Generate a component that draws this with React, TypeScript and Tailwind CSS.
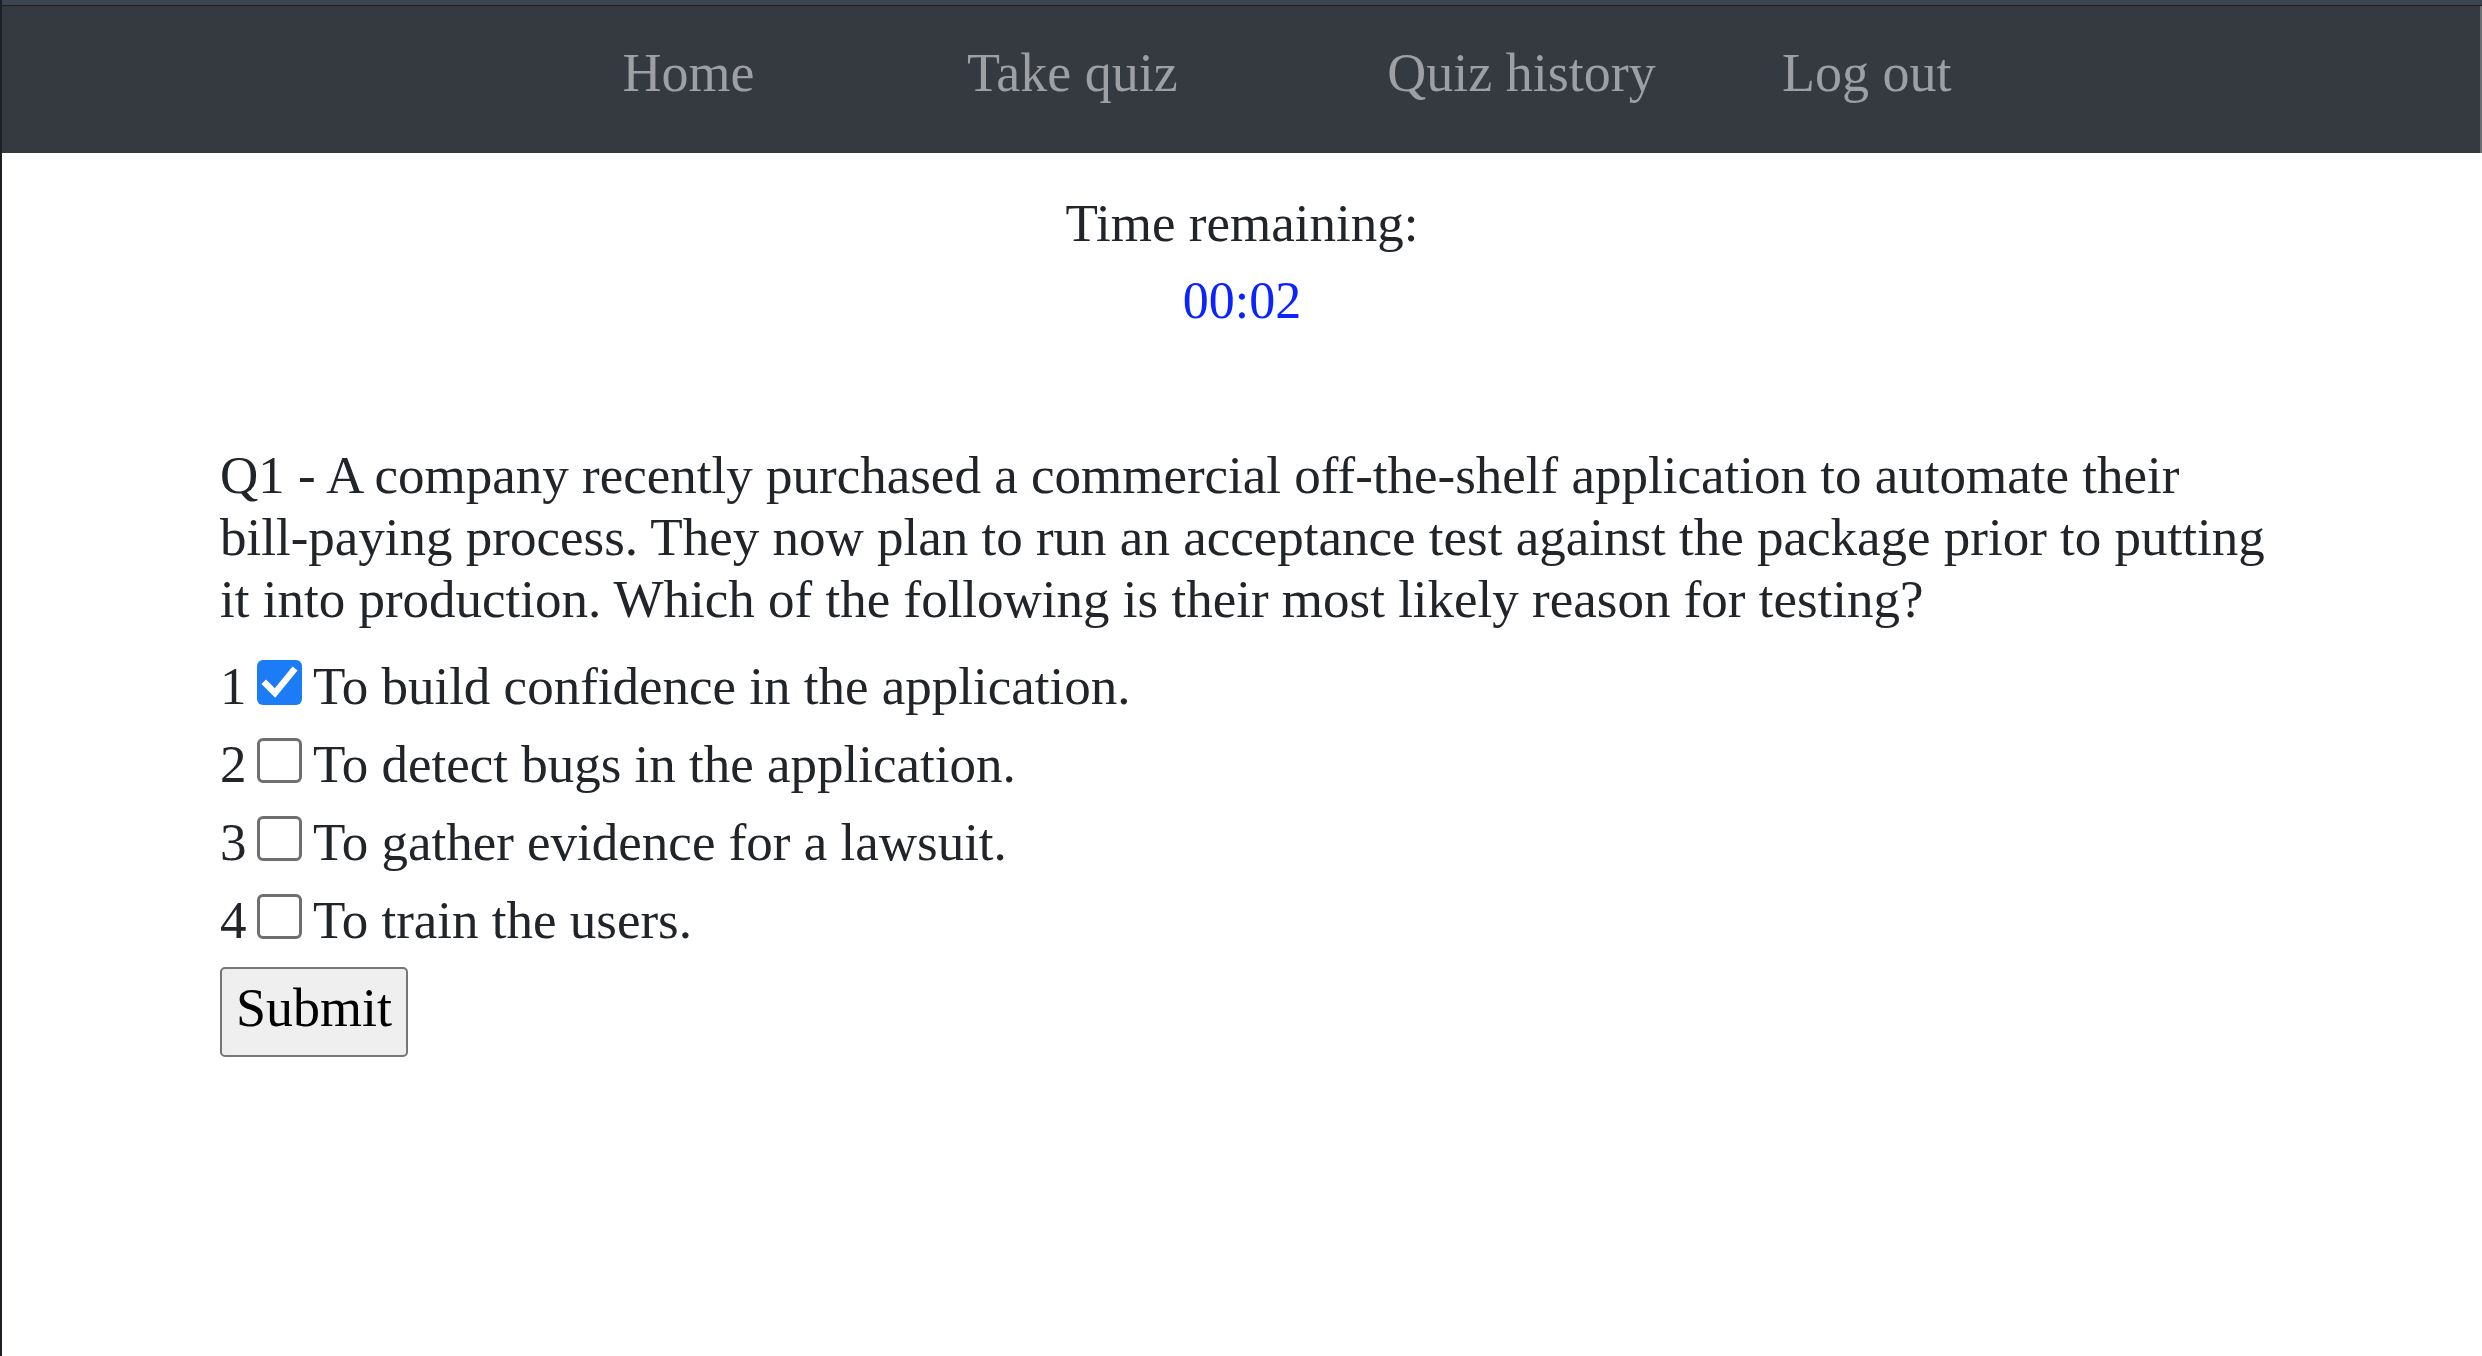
import { useState } from "react";

const navLinks = [
  { label: "Home", width: "w-[137px]", gap: "ml-0" },
  { label: "Take quiz", width: "w-[210px]", gap: "ml-[210px]" },
  { label: "Quiz history", width: "w-[269px]", gap: "ml-[210px]" },
  { label: "Log out", width: "w-[169px]", gap: "ml-[126px]" },
];

const answers = [
  "To build confidence in the application.",
  "To detect bugs in the application.",
  "To gather evidence for a lawsuit.",
  "To train the users.",
];

const CheckBox = ({ checked, onToggle }: { checked: boolean; onToggle: () => void }) => (
  <button
    type="button"
    onClick={onToggle}
    className={
      checked
        ? "mt-[13px] w-[45px] h-[45px] shrink-0 rounded-[6px] bg-[#1b7cf6] flex items-center justify-center"
        : "mt-[13px] w-[45px] h-[45px] shrink-0 rounded-[6px] border-[3px] border-[#6f6f6f] bg-white"
    }
  >
    {checked && (
      <svg width="45" height="45" viewBox="0 0 45 45">
        <polyline
          points="9,24 18,33 36,11"
          fill="none"
          stroke="white"
          strokeWidth="6.5"
          strokeLinecap="square"
        />
      </svg>
    )}
  </button>
);

const App = () => {
  const [selected, setSelected] = useState<number[]>([0]);

  const toggle = (i: number) => {
    setSelected((prev) => (prev.includes(i) ? prev.filter((x) => x !== i) : [...prev, i]));
  };

  return (
    <div className="min-h-[1356px] bg-white border-l-2 border-[#1c1f23] font-['Liberation_Serif',serif] text-[#212529]">
      {/* top bar */}
      <div className="h-[5px] bg-[#3b4552]" />
      <div className="h-px bg-[#1c1f23]" />
      <nav className="h-[147px] bg-[#343a40] border-r-2 border-[#6b6e72] flex items-start pt-[40px] pl-[618px]">
        {navLinks.map((link) => (
          <a
            key={link.label}
            href="#"
            className={`${link.width} ${link.gap} text-center text-[54px] leading-[54px] text-[#9d9fa2] whitespace-nowrap`}
          >
            {link.label}
          </a>
        ))}
      </nav>

      {/* timer */}
      <div className="mt-[40px] text-center">
        <div className="text-[53px] leading-[60px]">Time remaining:</div>
        <div className="mt-[18px] text-[52px] leading-[60px] text-[#0b24ff]">00:02</div>
      </div>

      {/* question */}
      <div className="mt-[113px] pl-[218px]">
        <p className="text-[53px] leading-[62px] whitespace-nowrap">
          Q1 - A company recently purchased a commercial off-the-shelf application to automate their
          <br />
          bill-paying process. They now plan to run an acceptance test against the package prior to putting
          <br />
          it into production. Which of the following is their most likely reason for testing?
        </p>

        <div className="mt-[17px] flex flex-col">
          {answers.map((answer, i) => (
            <div key={answer} className="flex items-start h-[78px] text-[53px] leading-[78px]">
              <span className="w-[37px]">{i + 1}</span>
              <CheckBox checked={selected.includes(i)} onToggle={() => toggle(i)} />
              <span className="ml-[11px] whitespace-nowrap">{answer}</span>
            </div>
          ))}
        </div>

        <button
          type="button"
          className="mt-[8px] w-[188px] h-[90px] pb-[8px] border-2 border-[#767676] rounded-[5px] bg-[#efefef] text-black text-[54px] leading-none"
        >
          Submit
        </button>
      </div>
    </div>
  );
};

export default App;
